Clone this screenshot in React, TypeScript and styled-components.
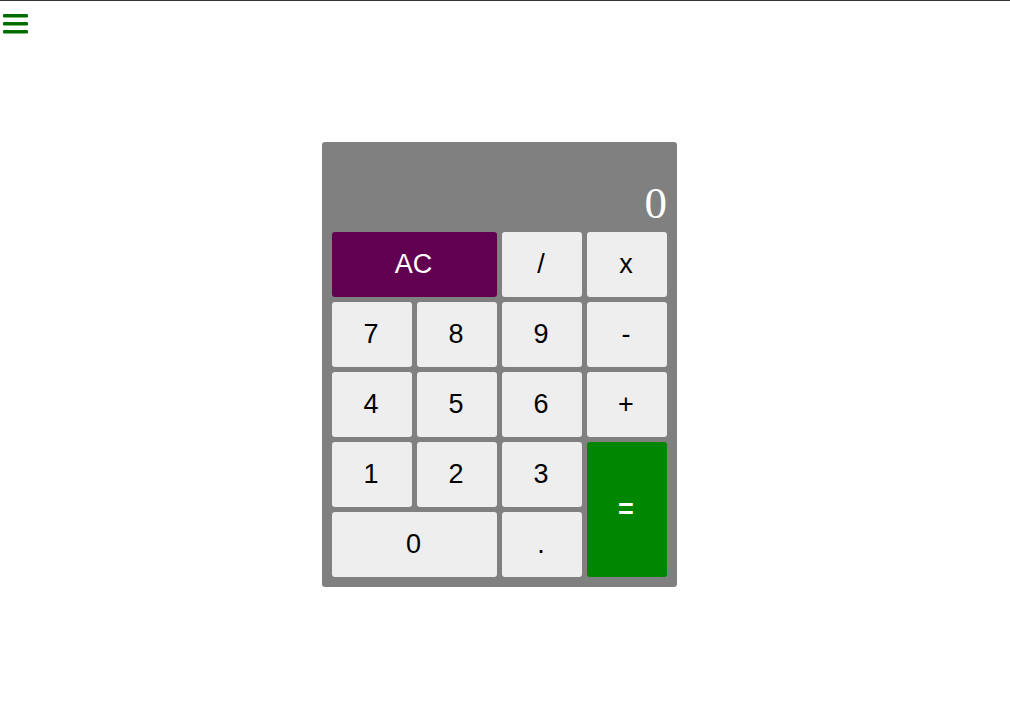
import React from "react";
import styled, { createGlobalStyle } from "styled-components";

const Global = createGlobalStyle`
  html, body { margin: 0; padding: 0; background: #fff; }
  body { font-family: "Liberation Sans", Arial, sans-serif; }
`;

const Page = styled.div`
  display: flex;
  flex-direction: column;
  min-height: 704px;
`;

const TopBar = styled.header`
  border-top: 1px solid #333;
  height: 41px;
  padding: 13px 0 0 3px;
  box-sizing: border-box;
`;

const MenuButton = styled.button`
  border: 0;
  background: transparent;
  padding: 0;
  display: block;
  width: 25px;
  height: 20px;
  cursor: pointer;
`;

const Stage = styled.main`
  display: flex;
  justify-content: center;
  padding: 101px 11px 0 0;
`;

const Calculator = styled.div`
  width: 355px;
  box-sizing: border-box;
  background: #808080;
  border-radius: 3px;
  padding: 10px;
  display: flex;
  flex-direction: column;
  gap: 5px;
`;

const Display = styled.div`
  height: 75px;
  display: flex;
  align-items: flex-end;
  justify-content: flex-end;
  color: #fff;
  font-family: "Liberation Serif", "Times New Roman", serif;
  font-size: 45px;
  line-height: 1;
  padding-bottom: 1px;
  box-sizing: border-box;
`;

const Keys = styled.div`
  display: grid;
  grid-template-columns: repeat(4, 80px);
  grid-auto-rows: 65px;
  gap: 5px;
`;

type Variant = "plain" | "clear" | "equals";

const Key = styled.button<{ $variant?: Variant; $cols?: number; $rows?: number }>`
  border: 0;
  border-radius: 3px;
  padding: 0 2px 0 0;
  font-family: "Liberation Sans", Arial, sans-serif;
  font-size: 27px;
  font-weight: ${(p) => (p.$variant === "equals" ? 700 : 400)};
  cursor: pointer;
  grid-column: span ${(p) => p.$cols ?? 1};
  grid-row: span ${(p) => p.$rows ?? 1};
  background: ${(p) =>
    p.$variant === "clear" ? "#610051" : p.$variant === "equals" ? "#008600" : "#eeeeee"};
  color: ${(p) => (p.$variant && p.$variant !== "plain" ? "#fff" : "#000")};
`;

const MenuIcon = () => (
  <svg width="25" height="20" viewBox="0 0 25 20" shapeRendering="geometricPrecision">
    <rect x="0" y="0" width="25" height="3.5" rx="1.3" fill="#006d00" />
    <rect x="0" y="8" width="25" height="3.5" rx="1.3" fill="#006d00" />
    <rect x="0" y="16" width="25" height="3.5" rx="1.3" fill="#006d00" />
  </svg>
);

export default function App() {
  return (
    <Page>
      <Global />
      <TopBar>
        <MenuButton aria-label="menu">
          <MenuIcon />
        </MenuButton>
      </TopBar>
      <Stage>
        <Calculator>
          <Display>0</Display>
          <Keys>
            <Key $variant="clear" $cols={2}>AC</Key>
            <Key>/</Key>
            <Key>x</Key>
            <Key>7</Key>
            <Key>8</Key>
            <Key>9</Key>
            <Key>-</Key>
            <Key>4</Key>
            <Key>5</Key>
            <Key>6</Key>
            <Key>+</Key>
            <Key>1</Key>
            <Key>2</Key>
            <Key>3</Key>
            <Key $variant="equals" $rows={2}>=</Key>
            <Key $cols={2}>0</Key>
            <Key>.</Key>
          </Keys>
        </Calculator>
      </Stage>
    </Page>
  );
}
